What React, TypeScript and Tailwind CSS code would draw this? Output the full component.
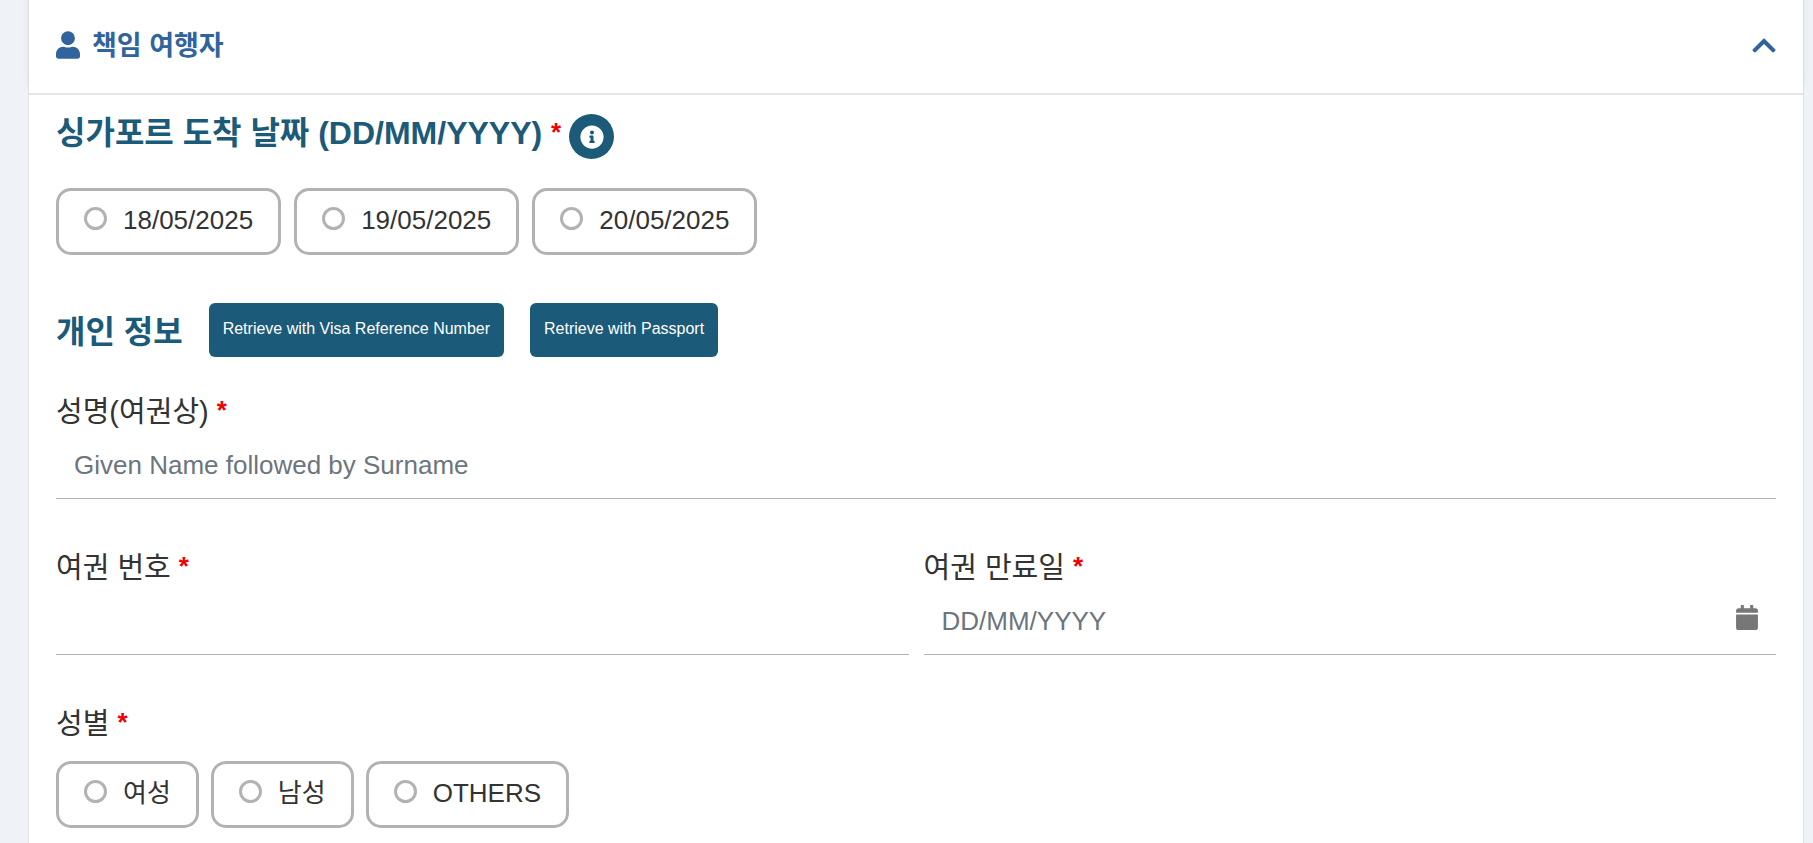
import { useState } from "react";
import { FaCalendar, FaChevronUp, FaInfoCircle, FaUser } from "react-icons/fa";

const dates = ["18/05/2025", "19/05/2025", "20/05/2025"];
const genders = ["여성", "남성", "OTHERS"];

function Required() {
  return <span className="align-[3px] text-[26px] leading-none font-bold text-[#f00000]">*</span>;
}

function RadioBox({ name, label, checked, onSelect }: {
  name: string;
  label: string;
  checked: boolean;
  onSelect: () => void;
}) {
  return (
    <label className="flex h-[67px] cursor-pointer items-center rounded-[15px] border-3 border-[#b2b2b2] px-[25px] pb-1 text-[26px] leading-10">
      <input
        type="radio"
        name={name}
        checked={checked}
        onChange={onSelect}
        className="mr-4 mb-[2px] size-[23px] appearance-none rounded-full border-3 border-[#b2b2b2] checked:bg-[#1b5a79]"
      />
      {label}
    </label>
  );
}

function Field({ id, label, placeholder, icon }: {
  id: string;
  label: string;
  placeholder?: string;
  icon?: React.ReactNode;
}) {
  return (
    <div className="min-w-0 flex-1">
      <label htmlFor={id} className="block h-10 text-[29px] leading-[42px]">
        {label} <Required />
      </label>
      <div className="flex items-center border-b border-[#b2b2b2] px-[18px]">
        <input
          id={id}
          type="text"
          placeholder={placeholder}
          className="h-[67px] min-w-0 flex-1 pt-[2px] text-[26px] outline-none placeholder:text-[#6c757d]"
        />
        {icon}
      </div>
    </div>
  );
}

export default function App() {
  const [open, setOpen] = useState(true);
  const [date, setDate] = useState("");
  const [gender, setGender] = useState("");

  return (
    <div
      lang="ko"
      className="min-h-screen bg-[#eff3f7] pr-[9px] pl-7 font-['Liberation_Sans','Noto_Sans_CJK_KR',sans-serif] text-[#333333]"
    >
      <div className="min-h-screen border-x border-[#e5e5e5] bg-white">
        {/* Accordion header */}
        <h2 className="border-b-2 border-[#e5e5e5] shadow-[0_-8px_8px_rgba(0,0,0,0.08)]">
          <button
            type="button"
            aria-expanded={open}
            onClick={() => setOpen(!open)}
            className="flex h-[93px] w-full items-center gap-3 bg-white px-[27px] pb-[3px] text-[27px] font-bold text-[#31639c]"
          >
            <FaUser className="h-7 w-6" />
            <span className="pt-[2px]">책임 여행자</span>
            <FaChevronUp className="ml-auto h-[27px] w-6" />
          </button>
        </h2>

        {open && (
          <form className="px-[27px] pt-[19px] pb-4">
            <div className="flex items-center gap-2">
              <h3 className="h-11 text-[32px] leading-9 font-bold text-[#1b5a79]">
                싱가포르 도착 날짜 (DD/MM/YYYY) <Required />
              </h3>
              <button
                type="button"
                aria-label="도착 날짜"
                className="flex size-[45px] items-center justify-center rounded-full bg-[#1b5a79] text-white"
              >
                <FaInfoCircle className="size-6" />
              </button>
            </div>

            <div className="mt-[29px] flex flex-wrap gap-[13px]">
              {dates.map((d) => (
                <RadioBox key={d} name="arrival" label={d} checked={date === d} onSelect={() => setDate(d)} />
              ))}
            </div>

            <div className="mt-12 flex flex-wrap items-center gap-[26px]">
              <h3 className="pt-1 text-[32px] leading-9 font-bold text-[#1b5a79]">개인 정보</h3>
              {["Retrieve with Visa Reference Number", "Retrieve with Passport"].map((text) => (
                <button
                  key={text}
                  type="button"
                  className="h-[54px] rounded-md bg-[#1b5a79] px-[14px] pb-[2px] text-base text-white"
                >
                  {text}
                </button>
              ))}
            </div>

            <div className="mt-[34px]">
              <Field id="name" label="성명(여권상)" placeholder="Given Name followed by Surname" />
            </div>

            <div className="mt-12 flex gap-[15px]">
              <Field id="passport" label="여권 번호" />
              <Field
                id="expiry"
                label="여권 만료일"
                placeholder="DD/MM/YYYY"
                icon={<FaCalendar className="mb-[6px] h-[25px] w-[22px] text-[#777777]" />}
              />
            </div>

            <fieldset className="mt-12">
              <legend className="h-10 text-[29px] leading-[42px]">
                성별 <Required />
              </legend>
              <div className="mt-[18px] flex flex-wrap gap-3">
                {genders.map((g) => (
                  <RadioBox key={g} name="gender" label={g} checked={gender === g} onSelect={() => setGender(g)} />
                ))}
              </div>
            </fieldset>
          </form>
        )}
      </div>
    </div>
  );
}
